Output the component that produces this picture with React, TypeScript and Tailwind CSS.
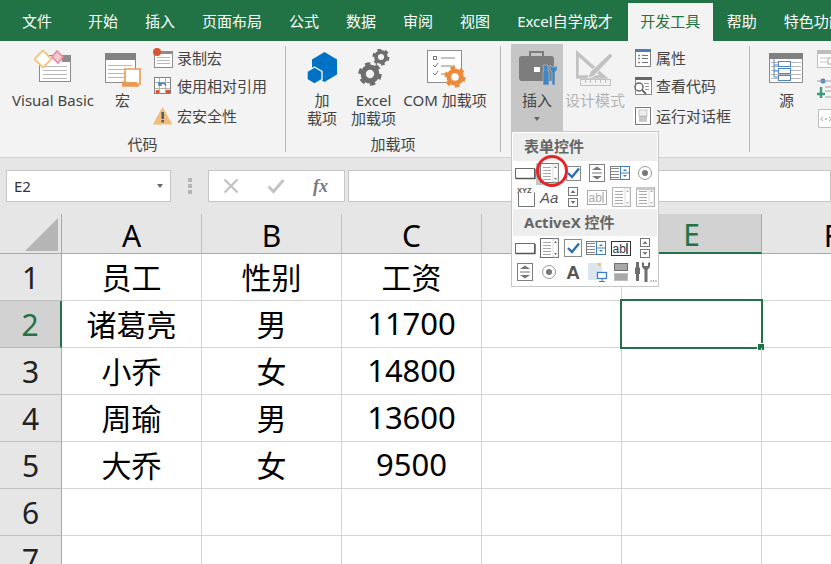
const gray = "#7b7b7b";

const tabs = ["开始", "插入", "页面布局", "公式", "数据", "审阅", "视图", "Excel自学成才"];
const columns = ["A", "B", "C", "", "E", "F"];
const rows = [
  ["员工", "性别", "工资"],
  ["诸葛亮", "男", "11700"],
  ["小乔", "女", "14800"],
  ["周瑜", "男", "13600"],
  ["大乔", "女", "9500"],
  ["", "", ""],
  ["", "", ""],
];

const Gear = ({ cx, cy, r, color }: { cx: number; cy: number; r: number; color: string }) => {
  const teeth = 2 * Math.PI * r * 0.92;
  return (
    <g fill="none" stroke={color}>
      <circle cx={cx} cy={cy} r={r * 0.62} strokeWidth={r * 0.48} />
      <circle cx={cx} cy={cy} r={r * 0.92} strokeWidth={r * 0.3} strokeDasharray={`${teeth / 12} ${teeth / 12}`} />
    </g>
  );
};

const TableLines = ({ x, y, w, n, gap = 4 }: { x: number; y: number; w: number; n: number; gap?: number }) => (
  <g stroke="#b9b9b9">
    {Array.from({ length: n }).map((_, i) => (
      <line key={i} x1={x} x2={x + w} y1={y + i * gap + 0.5} y2={y + i * gap + 0.5} />
    ))}
  </g>
);

const VbIcon = () => (
  <svg width="38" height="33" viewBox="0 0 38 33">
    <rect x="5.5" y="5.5" width="31" height="26" fill="#fff" stroke="#8c8c8c" />
    <rect x="28" y="5" width="9" height="7" fill="#8c8c8c" />
    <TableLines x={9} y={16} w={24} n={4} />
    <path d="M9 0.5L17.5 9L9 17.5L0.5 9Z" fill="#fff" stroke="#f0c884" strokeWidth="2" />
    <path d="M23 1L29 7L24 13L18 7Z" fill="#f7c9d0" stroke="#e58a9b" strokeWidth="1.6" />
  </svg>
);

const MacroIcon = () => (
  <svg width="36" height="34" viewBox="0 0 36 34">
    <rect x="0.5" y="0.5" width="30" height="29" fill="#fff" stroke="#8c8c8c" />
    <rect x="0" y="0" width="31" height="7" fill="#828282" />
    <TableLines x={3} y={12} w={24} n={4} gap={4} />
    <path d="M20 16H35V31H33V33H18V29H20Z" fill="#fff" stroke="#ea9a4f" strokeWidth="1.6" />
    <rect x="17" y="29" width="15" height="4" fill="#ea9a4f" />
  </svg>
);

const RecordIcon = () => (
  <svg width="20" height="20" viewBox="0 0 20 20">
    <rect x="1.5" y="3.5" width="18" height="16" fill="#fff" stroke="#8c8c8c" />
    <rect x="6" y="3" width="14" height="3" fill="#8c8c8c" />
    <TableLines x={4} y={9} w={13} n={3} gap={3} />
    <circle cx="4" cy="4" r="4" fill="#d9552f" />
  </svg>
);

const RelativeIcon = () => (
  <svg width="20" height="20" viewBox="0 0 20 20">
    <rect x="1.5" y="1.5" width="16" height="16" fill="#fff" stroke="#7f7f7f" />
    <path d="M1.5 6.5H17.5M1.5 12.5H17.5M6.5 1.5V17.5M12.5 1.5V17.5" stroke="#b0b0b0" />
    <rect x="3" y="14" width="3" height="3" fill="#d9552f" />
    <rect x="13" y="14" width="4" height="3" fill="#d9552f" />
    <path d="M6 8.5C8 6 12 6.5 13 9.5M6 6V9H9" fill="none" stroke="#3f7fc1" strokeWidth="1.5" />
  </svg>
);

const WarningIcon = () => (
  <svg width="20" height="18" viewBox="0 0 20 18">
    <path d="M9.5 0L19.5 17.5H0Z" fill="#eebd7c" />
    <rect x="8.5" y="5" width="2.4" height="7" fill="#555" />
    <rect x="8.5" y="13" width="2.4" height="2.4" fill="#555" />
  </svg>
);

const AddInIcon = () => (
  <svg width="31" height="32" viewBox="0 0 31 32">
    <path d="M17.5 0L30 7.5V22.5L17.5 30L5 22.5V7.5Z" fill="#0072c6" />
    <path d="M7.5 15L15 19.5V27.5L7.5 32L0 27.5V19.5Z" fill="#0072c6" stroke="#f3f3f3" strokeWidth="1.4" />
  </svg>
);

const GearsIcon = () => (
  <svg width="34" height="37" viewBox="0 0 34 37">
    <Gear cx={13} cy={25} r={11} color="#6e6e6e" />
    <Gear cx={24} cy={8} r={8} color="#6e6e6e" />
  </svg>
);

const ComIcon = () => (
  <svg width="40" height="38" viewBox="0 0 40 38">
    <rect x="0.5" y="0.5" width="34" height="32" fill="#fff" stroke="#8c8c8c" />
    <rect x="6.5" y="6.5" width="3" height="3" fill="none" stroke="#777" />
    <path d="M6 15L8 17L11 13M6 23L8 25L11 21" fill="none" stroke="#777" />
    <path d="M14 8H28M14 16H28M14 24H20" stroke="#888" />
    <Gear cx={28} cy={27} r={10} color="#ed8b3a" />
  </svg>
);

const ToolboxIcon = () => (
  <svg width="39" height="37" viewBox="0 0 39 37">
    <path d="M11 6V2H24V6" fill="none" stroke="#7d7d7d" strokeWidth="2" />
    <rect x="0" y="6" width="35" height="25" rx="3" fill="#7d7d7d" />
    <rect x="15" y="17" width="6" height="5" fill="#fff" />
    <path d="M24 15H29V21H30V35H24V21H25Z" fill="#3f86c8" stroke="#c6c6c6" strokeWidth="0.6" />
    <path d="M31 15V20L33 22V35H36V22L38 20V15L36 17H33Z" fill="#3f86c8" stroke="#c6c6c6" strokeWidth="0.6" />
  </svg>
);

const DesignIcon = () => (
  <svg width="39" height="37" viewBox="0 0 39 37">
    <path d="M1 3L28 27H1Z" fill="none" stroke="#c2c2c2" strokeWidth="3.5" />
    <path d="M14 22L34 3L37 6L18 26L12 28Z" fill="#c2c2c2" stroke="#f3f3f3" />
    <rect x="4.5" y="29.5" width="30" height="6" fill="#f3f3f3" stroke="#c2c2c2" />
    <path d="M9.5 30V33M14.5 30V33M19.5 30V33M24.5 30V33M29.5 30V33" stroke="#c2c2c2" />
  </svg>
);

const PropsIcon = () => (
  <svg width="20" height="20" viewBox="0 0 20 20">
    <rect x="2.5" y="1.5" width="15" height="17" fill="#fff" stroke="#7f7f7f" />
    <rect x="2" y="1" width="16" height="3" fill="#4a7ebb" />
    <path d="M9 7.5H15M9 10.5H15M9 14.5H15" stroke="#777" />
    <path d="M5 7.5H7M5 10.5H7M5 14.5H7" stroke="#8a8a8a" strokeWidth="1.6" />
  </svg>
);

const CodeIcon = () => (
  <svg width="20" height="20" viewBox="0 0 20 20">
    <rect x="2.5" y="1.5" width="16" height="17" fill="#fff" stroke="#8c8c8c" />
    <rect x="2" y="1" width="17" height="3" fill="#666" />
    <path d="M11 7.5H16M12 10.5H16M12 13.5H16" stroke="#999" />
    <circle cx="6" cy="11" r="4" fill="#fff" stroke="#666" strokeWidth="1.5" />
    <path d="M9 14L13 18" stroke="#666" strokeWidth="2" />
  </svg>
);

const DialogIcon = () => (
  <svg width="20" height="20" viewBox="0 0 20 20">
    <rect width="20" height="20" fill="#fff" />
    <rect x="2.5" y="1.5" width="15" height="17" fill="#fff" stroke="#777" />
    <rect x="6" y="4" width="8" height="12" fill="#c8c8c8" />
    <rect x="6" y="4" width="8" height="6" fill="#ededed" stroke="#999" strokeWidth="0.5" />
  </svg>
);

const SourceIcon = () => (
  <svg width="35" height="31" viewBox="0 0 35 31">
    <rect x="0.5" y="0.5" width="33" height="29" fill="#fff" stroke="#8c8c8c" />
    <rect width="34" height="6" fill="#808080" />
    <TableLines x={2} y={9} w={30} n={5} gap={4} />
    <path d="M5 6V24H9M5 12H9M5 18H9" fill="none" stroke="#4a86c5" />
    <g fill="#fff" stroke="#4a86c5">
      <rect x="9.5" y="8.5" width="12" height="5" />
      <rect x="9.5" y="15.5" width="12" height="5" />
      <rect x="9.5" y="22.5" width="12" height="5" />
    </g>
  </svg>
);

const XmlMapIcon = () => (
  <svg width="20" height="19" viewBox="0 0 20 19">
    <rect x="0.5" y="0.5" width="26" height="17" fill="#fff" stroke="#bdbdbd" />
    <rect width="27" height="4" fill="#bdbdbd" />
    <path d="M3 8H10M3 12H10" stroke="#c8c8c8" />
    <rect x="11" y="8" width="8" height="6" fill="none" stroke="#aaa" />
  </svg>
);

const XmlPackIcon = () => (
  <svg width="20" height="22" viewBox="0 0 20 22">
    <circle cx="6" cy="3" r="2.5" fill="#4a86c5" />
    <path d="M0 3H20M8 9H20M8 13H20M8 19H20" stroke="#a0a0a0" />
    <path d="M4 9V20M0 16H8" stroke="#3c9b78" strokeWidth="2.4" />
  </svg>
);

const XmlDocIcon = () => (
  <svg width="20" height="19" viewBox="0 0 20 19">
    <path d="M1.5 0.5H14L20 5V18.5H1.5Z" fill="#fff" stroke="#bdbdbd" />
    <path d="M6 8L3.5 10L6 12M12 8L14.5 10L12 12" fill="none" stroke="#aaa" />
    <circle cx="9" cy="10" r="1" fill="#aaa" />
  </svg>
);

const Caret = ({ className = "" }: { className?: string }) => (
  <span className={`inline-block w-0 h-0 border-x-[3.5px] border-x-transparent border-t-[4px] border-t-[#666] ${className}`} />
);

const LargeButton = ({
  icon,
  iconClass,
  label,
  className = "",
}: {
  icon: React.ReactNode;
  iconClass: string;
  label: string;
  className?: string;
}) => (
  <div className={`flex flex-col items-center ${className}`}>
    <div className={`h-[45px] flex items-start justify-center ${iconClass}`}>{icon}</div>
    <div className="leading-[18px] whitespace-pre text-center">{label}</div>
  </div>
);

const SmallButton = ({ icon, label, className = "" }: { icon: React.ReactNode; label: string; className?: string }) => (
  <div className={`h-[28px] flex items-center gap-[3px] whitespace-nowrap ${className}`}>
    <span className="w-[20px] h-[20px] flex items-center justify-center shrink-0">{icon}</span>
    <span>{label}</span>
  </div>
);

const Group = ({ label, width, children }: { label?: string; width: string; children: React.ReactNode }) => (
  <div className={`${width} shrink-0 h-[106px] flex flex-col border-r border-[#b5b5b5]`}>
    <div className="h-[90px] flex items-start">{children}</div>
    <div className="h-[16px] leading-[16px] text-center">{label}</div>
  </div>
);

const ListBox = ({ c = gray, x = 3 }: { c?: string; x?: number }) => (
  <g>
    <rect x={x + 0.5} y="2.5" width="18" height="19" fill="#fff" stroke={c} />
    <path d={`M${x + 3} 6.5H${x + 11}M${x + 3} 9.5H${x + 11}M${x + 3} 12.5H${x + 11}M${x + 3} 15.5H${x + 11}M${x + 3} 18.5H${x + 11}`} stroke="#a8a8a8" />
    <rect x={x + 13} y="3" width="5" height="18" fill="#fff" stroke="#bbb" strokeWidth="0.5" />
    <path d={`M${x + 14} 7L${x + 15.5} 5L${x + 17} 7ZM${x + 14} 17L${x + 15.5} 19L${x + 17} 17Z`} fill={c} />
  </g>
);

const Combo = ({ c = "#3f7fc1" }: { c?: string }) => (
  <g>
    <path d="M2 7.5H10M2 10.5H10M2 13.5H10M2 16.5H10" stroke="#888" />
    <rect x="1.5" y="5.5" width="19" height="13" fill="none" stroke="#7f7f7f" />
    <rect x="11.5" y="5.5" width="9" height="13" fill="#fff" stroke={c} />
    <path d="M11.5 12H20.5" stroke={c} />
    <path d="M14 10L16 8L18 10ZM14 14L16 16L18 14Z" fill={c} />
  </g>
);

const Spin = () => (
  <g>
    <rect x="4.5" y="3.5" width="15" height="17" fill="#fff" stroke="#808080" />
    <path d="M7 9L12 5.5L17 9ZM7 15L12 18.5L17 15Z" fill="#777" />
    <path d="M7 12H17" stroke="#777" />
  </g>
);

const Radio = () => (
  <g>
    <circle cx="12" cy="12" r="6.5" fill="#fff" stroke="#999" />
    <circle cx="12" cy="12" r="3" fill="#777" />
  </g>
);

const Scroll = ({ c = "#777" }: { c?: string }) => (
  <g>
    <rect x="7.5" y="2.5" width="9" height="8" fill="#fff" stroke={c} />
    <rect x="7.5" y="13.5" width="9" height="8" fill="#fff" stroke={c} />
    <path d="M9.5 8L12 5L14.5 8ZM9.5 16L12 19L14.5 16Z" fill={c} />
  </g>
);

const Button = () => (
  <g>
    <rect x="2.5" y="7.5" width="19" height="10" fill="#fff" stroke="#6b6b6b" />
    <path d="M3 17.5H22V8" fill="none" stroke="#555" strokeWidth="1.4" />
  </g>
);

const Check = ({ big = false }: { big?: boolean }) => (
  <g>
    <rect x={big ? 3.5 : 5.5} y={big ? 3.5 : 5.5} width={big ? 17 : 14} height={big ? 17 : 14} fill="#fff" stroke="#8a8a8a" />
    <path d="M7 12L11 16L18 7.5" fill="none" stroke="#2b6fb5" strokeWidth="2.4" />
  </g>
);

const Abl = ({ c }: { c: string }) => (
  <g>
    <rect x="2.5" y="5.5" width="19" height="14" fill="#fff" stroke={c} />
    <text x="3.5" y="17" fontSize="12" fill={c} fontFamily="'Liberation Sans', sans-serif">
      ab
    </text>
    <path d="M18 7V18" stroke={c === "#333" ? "#111" : c} strokeWidth="1.2" />
  </g>
);

const formIcons = [
  <Button />,
  <ListBox />,
  <Check />,
  <Spin />,
  <Combo />,
  <Radio />,
  <g>
    <path d="M5.5 7.5V21.5H21.5V7.5" fill="#fff" stroke="#777" />
    <text x="4" y="8" fontSize="7.5" fontWeight="700" fill="#555" fontFamily="'Liberation Sans', sans-serif">
      XYZ
    </text>
  </g>,
  <text x="3" y="18" fontSize="15" fontStyle="italic" fill="#555" fontFamily="'Liberation Sans', sans-serif">
    Aa
  </text>,
  <Scroll />,
  <Abl c="#a9a9a9" />,
  <ListBox c="#b5b5b5" />,
  <g>
    <ListBox c="#b5b5b5" x={3} />
    <rect x="3" y="2" width="18" height="3" fill="#c9c9c9" />
  </g>,
];

const activeXIcons = [
  <Button />,
  <ListBox c="#6b6b6b" />,
  <Check big />,
  <Combo />,
  <Abl c="#333" />,
  <Scroll />,
  <Spin />,
  <Radio />,
  <text x="12" y="19" textAnchor="middle" fontSize="19" fontWeight="700" fill="#555" fontFamily="'Liberation Sans', sans-serif">
    A
  </text>,
  <g>
    <path d="M3 3H14L17 7V13H12V20H3Z" fill="#dce6f0" />
    <rect x="13" y="3" width="3" height="3" fill="#f2c26b" />
    <rect x="12.5" y="12.5" width="9" height="6" fill="#fff" stroke="#3f7fc1" strokeWidth="1.3" />
    <path d="M17 19V21M14 21.5H20" stroke="#3f7fc1" />
  </g>,
  <g>
    <rect x="5.5" y="3.5" width="13" height="7" fill="#a8a8a8" stroke="#6f6f6f" />
    <rect x="5.5" y="13.5" width="13" height="7" fill="#a8a8a8" stroke="#bdbdbd" />
  </g>,
  <g fill="#6e6e6e">
    <path d="M3 2H6V7L7 8V14H6V21H3V14H2V8L3 7Z" />
    <path d="M9 2V7L11.5 10V22H14.5V10L17 7V2L15 3V6H11V3Z" />
    <circle cx="18" cy="21" r="0.7" />
    <circle cx="20.5" cy="21" r="0.7" />
    <circle cx="23" cy="21" r="0.7" />
  </g>,
];

const IconGrid = ({ icons }: { icons: React.ReactNode[] }) => (
  <div className="grid grid-cols-6 auto-rows-[24px]">
    {icons.map((icon, i) => (
      <div key={i} className="flex items-center justify-center">
        <svg width="24" height="24" viewBox="0 0 24 24">
          {icon}
        </svg>
      </div>
    ))}
  </div>
);

export default function App() {
  return (
    <div
      className="relative w-[831px] h-[564px] overflow-hidden bg-white text-[15px] text-[#444]"
      style={{ fontFamily: "'Noto Sans', 'Noto Sans CJK SC', sans-serif" }}
    >
      {/* tabs */}
      <div className="h-[41px] bg-[#217346] flex items-end pl-[8.5px] text-white text-[15px] whitespace-nowrap overflow-hidden">
        <div className="h-[38px] shrink-0 pl-[13.5px] pr-[22.5px] leading-[36px]">文件</div>
        {tabs.map((t) => (
          <div key={t} className="h-[38px] shrink-0 px-[13.5px] leading-[36px]">
            {t}
          </div>
        ))}
        <div className="h-[38px] w-[85px] shrink-0 ml-[1.5px] mr-[0.5px] text-center leading-[36px] bg-[#f3f3f3] text-[#217346]">开发工具</div>
        <div className="h-[38px] shrink-0 px-[13.5px] leading-[36px]">帮助</div>
        <div className="h-[38px] shrink-0 px-[13.5px] leading-[36px]">特色功能</div>
      </div>

      {/* ribbon */}
      <div className="h-[117px] bg-[#f3f3f3] border-b border-[#d2d2d2] pt-[5px] flex overflow-hidden">
        <Group label="代码" width="w-[286px]">
          <LargeButton icon={<VbIcon />} iconClass="pt-[4px]" label="Visual Basic" className="ml-[12px] w-[82px]" />
          <LargeButton icon={<MacroIcon />} iconClass="pt-[7px]" label="宏" className="ml-[11px] w-[35px]" />
          <div className="ml-[13px] -mt-[2px]">
            <SmallButton icon={<RecordIcon />} label="录制宏" className="gap-[4px]" />
            <SmallButton icon={<RelativeIcon />} label="使用相对引用" className="gap-[4px]" />
            <SmallButton icon={<WarningIcon />} label="宏安全性" className="gap-[4px] mt-[2px]" />
          </div>
        </Group>
        <Group label="加载项" width="w-[215px]">
          <LargeButton icon={<AddInIcon />} iconClass="pt-[6px]" label={"加\n载项"} className="ml-[21px] w-[30px]" />
          <LargeButton icon={<GearsIcon />} iconClass="pt-[3px]" label={"Excel\n加载项"} className="ml-[14px] w-[45px]" />
          <LargeButton icon={<ComIcon />} iconClass="pt-[4px] pl-[4px]" label="COM 加载项" className="ml-[6px] w-[86px]" />
        </Group>
        <Group width="w-[249px]">
          <div className="ml-[10px] w-[52px] h-[87px] -mt-[2px] bg-[#c6c6c6] flex flex-col items-center">
            <div className="h-[47px] pt-[6px] flex items-start justify-center pl-[2px]">
              <ToolboxIcon />
            </div>
            <div className="leading-[18px]">插入</div>
            <Caret className="mt-[8px]" />
          </div>
          <LargeButton icon={<DesignIcon />} iconClass="pt-[4px]" label="设计模式" className="ml-[2px] w-[60px] text-[#b4b4b4]" />
          <div className="ml-[8px] -mt-[2px]">
            <SmallButton icon={<PropsIcon />} label="属性" />
            <SmallButton icon={<CodeIcon />} label="查看代码" />
            <SmallButton icon={<DialogIcon />} label="运行对话框" className="mt-[2px]" />
          </div>
        </Group>
        <div className="flex items-start">
          <LargeButton icon={<SourceIcon />} iconClass="pt-[7px]" label="源" className="ml-[19px] w-[35px]" />
          <div className="ml-[13px] flex flex-col gap-[9px] pt-[4px]">
            <XmlMapIcon />
            <XmlPackIcon />
            <XmlDocIcon />
          </div>
        </div>
      </div>

      {/* formula bar */}
      <div className="h-[56px] bg-[#e6e6e6] pt-[12px] flex items-start text-[#333]">
        <div className="ml-[6px] w-[165px] h-[32px] bg-white border border-[#c6c6c6] flex items-center justify-between pl-[7px] pr-[7px]">
          <span>E2</span>
          <Caret />
        </div>
        <div className="w-[37px] h-[32px] flex flex-col items-center justify-center gap-[2px]">
          <span className="w-[4px] h-[4px] bg-[#b5b5b5]" />
          <span className="w-[4px] h-[4px] bg-[#b5b5b5]" />
          <span className="w-[4px] h-[4px] bg-[#b5b5b5]" />
        </div>
        <div className="w-[137px] h-[32px] bg-white border border-[#c6c6c6] flex items-center">
          <svg width="16" height="16" viewBox="0 0 16 16" className="ml-[14px]">
            <path d="M1.5 1.5L14.5 14.5M14.5 1.5L1.5 14.5" stroke="#c4c4c4" strokeWidth="2.4" />
          </svg>
          <svg width="18" height="16" viewBox="0 0 18 16" className="ml-[28px]">
            <path d="M1.5 8.5L6.5 13.5L16.5 2" fill="none" stroke="#c4c4c4" strokeWidth="3" />
          </svg>
          <span
            className="ml-[28px] text-[18px] italic font-bold text-[#7a7a7a]"
            style={{ fontFamily: "'Liberation Serif', serif" }}
          >
            fx
          </span>
        </div>
        <div className="ml-[3px] flex-1 h-[32px] bg-white border border-[#c6c6c6]" />
      </div>

      {/* sheet */}
      <div className="grid grid-cols-[62px_140px_140px_140px_140px_140px_140px] grid-rows-[40px_repeat(7,47px)] text-black">
        <div className="bg-[#e6e6e6] border-r border-b border-[#a8a8a8] relative">
          <svg width="33" height="33" viewBox="0 0 33 33" className="absolute left-[25px] top-[4px]">
            <path d="M33 0V33H0Z" fill="#b5b5b5" />
          </svg>
        </div>
        {columns.map((c, i) => (
          <div
            key={i}
            className={`flex items-center justify-center pt-[3px] text-[30px] border-r ${
              c === "E"
                ? "bg-[#d2d2d2] text-[#217346] border-r-[#a8a8a8] border-b-2 border-b-[#217346]"
                : "bg-[#e6e6e6] text-black border-r-[#c0c0c0] border-b border-b-[#a8a8a8]"
            }`}
          >
            {c}
          </div>
        ))}
        {rows.map((r, i) => (
          <div key={i} className="contents">
            <div
              className={`flex items-center justify-center text-[30px] border-b ${
                i === 1
                  ? "bg-[#d2d2d2] text-[#217346] border-r-2 border-r-[#217346] border-b-[#b5b5b5]"
                  : "bg-[#e6e6e6] text-[#222] border-r border-r-[#a8a8a8] border-b-[#c0c0c0]"
              }`}
            >
              {i + 1}
            </div>
            {r.map((cell, j) => (
              <div
                key={j}
                className={`flex items-center justify-center border-r border-b border-[#d4d4d4] whitespace-nowrap ${
                  j === 2 && i > 0 ? "text-[31px] pb-[2px]" : "text-[30px]"
                }`}
              >
                {cell}
              </div>
            ))}
            <div className="border-r border-b border-[#d4d4d4]" />
            <div className="relative border-r border-b border-[#d4d4d4]">
              {i === 1 && (
                <div className="absolute -left-[2px] -top-[2px] w-[143px] h-[50px] border-2 border-[#217346]">
                  <span className="absolute -right-[3px] -bottom-[3px] w-[7px] h-[7px] bg-[#217346] border-l border-t border-white" />
                </div>
              )}
            </div>
            <div className="border-b border-[#d4d4d4]" />
          </div>
        ))}
      </div>

      {/* insert dropdown */}
      <div className="absolute left-[511px] top-[131px] w-[148px] h-[156px] bg-white border border-[#c6c6c6] p-px text-[#666]">
        <div className="h-[28px] pb-[2px] bg-[#eeeeee] pl-[11px] flex items-center font-semibold">表单控件</div>
        <div className="relative">
          <div className="absolute left-[23px] top-[2px] w-[23px] h-[22px] bg-[#c6c6c6]" />
          <div className="relative">
            <IconGrid icons={formIcons} />
          </div>
        </div>
        <div className="h-[27px] bg-[#eeeeee] pl-[11px] flex items-center font-bold">ActiveX 控件</div>
        <IconGrid icons={activeXIcons} />
      </div>

      {/* red marker */}
      <div className="absolute left-[536px] top-[155px] w-[32px] h-[32px] rounded-full border-[3px] border-[#e5242a]" />
    </div>
  );
}
